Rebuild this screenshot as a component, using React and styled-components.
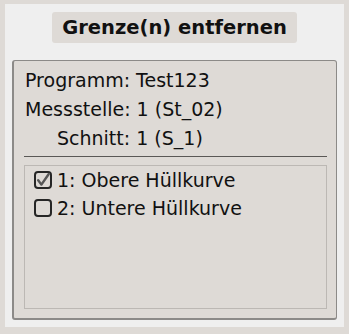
import React from 'react';
import styled, { createGlobalStyle } from 'styled-components';

const Global = createGlobalStyle`
  html, body { margin: 0; padding: 0; background: #dedad6; }
  body { font-family: 'DejaVu Sans', sans-serif; color: #111; }
`;

const Screen = styled.div`
  width: 349px;
  height: 334px;
  padding: 4px 5px 7px 5px;
  box-sizing: border-box;
  background: #dedad6;
`;

const Panel = styled.div`
  height: 100%;
  background: #efefef;
  box-sizing: border-box;
  padding: 8px 7px 7px 7px;
  display: flex;
  flex-direction: column;
  align-items: center;
`;

const Title = styled.div`
  width: 245px;
  height: 31px;
  background: #dedad6;
  border-radius: 3px;
  font-weight: bold;
  font-size: 19.5px;
  display: flex;
  align-items: center;
  justify-content: center;
`;

const Group = styled.div`
  align-self: stretch;
  margin-top: 17px;
  flex: 1;
  background: #dedad6;
  border: 1px solid #8c8a88;
  border-left-width: 2px;
  border-bottom-width: 2px;
  border-radius: 3px;
  padding: 5px 9px 9px 10px;
  display: flex;
  flex-direction: column;
`;

const Line = styled.div`
  font-size: 19px;
  height: 29px;
  line-height: 29px;
  padding-left: ${p => p.indent || 1}px;
  white-space: nowrap;
`;

const Separator = styled.div`
  height: 1px;
  background: #5a5856;
  margin: 3px 0 8px 0;
`;

const ListBox = styled.div`
  flex: 1;
  border: 1px solid #bcb8b4;
  padding: 0 0 0 9px;
`;

const Item = styled.label`
  display: flex;
  align-items: center;
  gap: 5px;
  height: 28px;
  font-size: 19px;
  white-space: nowrap;
`;

const Box = styled.span`
  width: 14px;
  height: 14px;
  border: 2px solid #262626;
  border-radius: 4px;
  display: inline-flex;
  align-items: center;
  justify-content: center;
`;

function Check({ checked }) {
  return (
    <Box>
      {checked && (
        <svg width="14" height="14" viewBox="0 0 14 14">
          <path d="M2.2 7.2 L5.4 11.6 L12.6 1.2" fill="none" stroke="#575757" strokeWidth="2.4" strokeLinecap="round" strokeLinejoin="round" />
        </svg>
      )}
    </Box>
  );
}

export default function App() {
  return (
    <Screen>
      <Global />
      <Panel>
        <Title>Grenze(n) entfernen</Title>
        <Group>
          <Line>Programm: Test123</Line>
          <Line>Messstelle: 1 (St_02)</Line>
          <Line indent={33}>Schnitt: 1 (S_1)</Line>
          <Separator />
          <ListBox>
            <Item><Check checked />1: Obere Hüllkurve</Item>
            <Item><Check />2: Untere Hüllkurve</Item>
          </ListBox>
        </Group>
      </Panel>
    </Screen>
  );
}
